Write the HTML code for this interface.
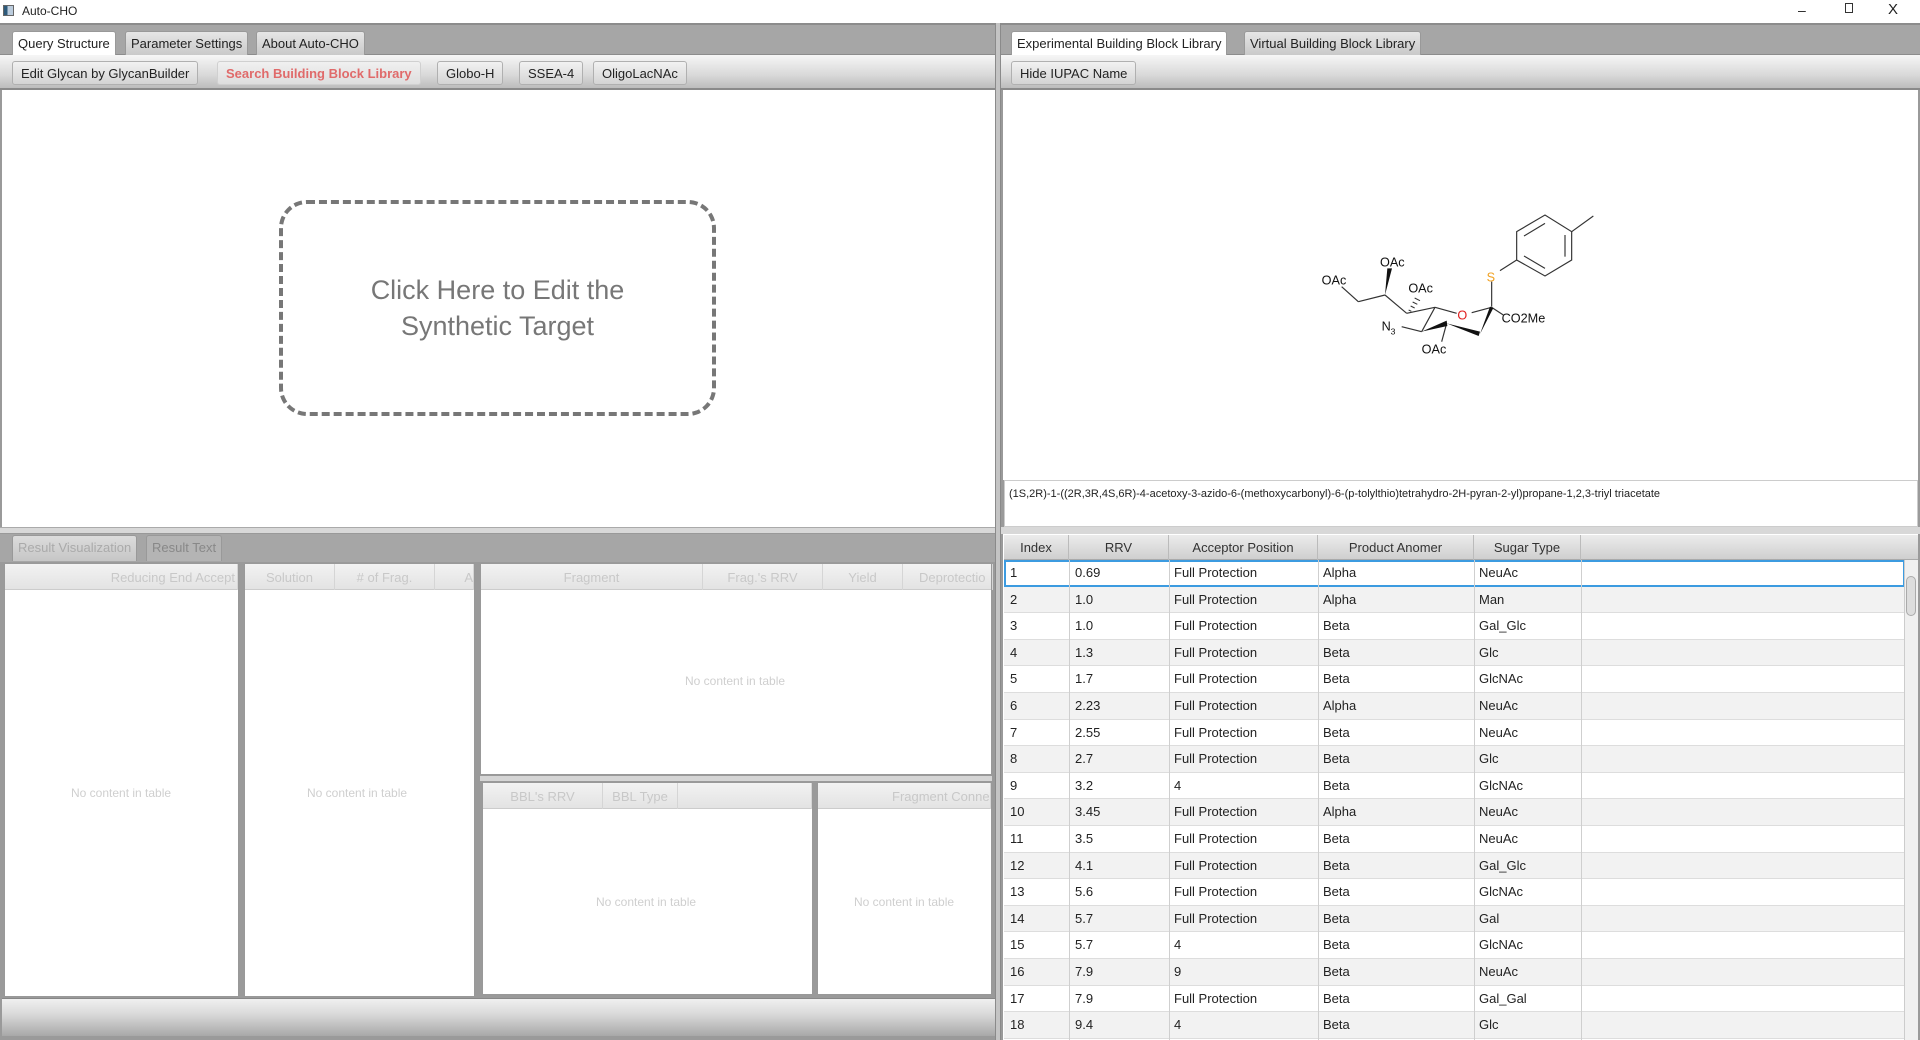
<!DOCTYPE html>
<html><head><meta charset="utf-8"><style>
*{box-sizing:border-box;margin:0;padding:0}
body{width:1920px;height:1040px;position:relative;overflow:hidden;background:#fff;font-family:"Liberation Sans",sans-serif;font-size:13px;color:#222}
.a{position:absolute}
.tabbar{background:#a6a6a6;border-top:2px solid #8c8c8c;border-bottom:1px solid #8c8c8c}
.tab{position:absolute;top:6px;height:24px;border:1px solid #999;border-bottom:none;border-radius:3px 3px 0 0;background:linear-gradient(#e6e6e6,#c9c9c9);padding:4px 5px 0;white-space:nowrap;color:#222}
.tab.sel{background:#fff;height:25px}
.tool{background:linear-gradient(#f6f6f6,#d9d9d9 60%,#bdbdbd);border-bottom:2px solid #8a8a8a}
.btn{position:absolute;top:6px;height:24px;border:1px solid #b0b0b0;border-radius:3px;background:linear-gradient(#f2f2f2,#d4d4d4);padding:4px 8px 0;white-space:nowrap;color:#222}
.hdr{position:absolute;background:linear-gradient(#f2f2f2,#e3e3e3);border-bottom:1px solid #ccc;height:26px;color:#c8c8c8;font-size:13px}
.hc{position:absolute;top:0;height:26px;border-right:1px solid #d5d5d5;padding-top:6px;text-align:center;overflow:hidden;white-space:nowrap}
.nc{position:absolute;color:#cfcfcf;font-size:12px;white-space:nowrap}
.pane{position:absolute;background:#fff;border:1px solid #999}
.rt{position:absolute;left:1004px;width:901px;height:26.6px;border-bottom:1px solid #ddd}
.rt span{position:absolute;top:5px;font-size:13px}
.vl{position:absolute;top:535px;bottom:0;width:1px;background:#cfcfcf}
</style></head><body>
<div class="a" style="left:3px;top:5px;width:11px;height:11px;border:1px solid #666;background:linear-gradient(90deg,#2d5a7a 40%,#bcd 40%)"></div>
<div class="a" style="left:22px;top:4px;font-size:12px">Auto-CHO</div>
<div class="a" style="left:1798px;top:2px;font-size:14px">–</div>
<div class="a" style="left:1845px;top:3px;width:8px;height:10px;border:1px solid #333"></div>
<div class="a" style="left:1888px;top:1px;font-size:15px">X</div>

<div class="a" style="left:0;top:23px;width:1920px;height:1017px;background:#9a9a9a"></div>

<div class="a tabbar" style="left:0;top:23px;width:995px;height:32px">
<div class="tab sel" style="left:12px">Query Structure</div>
<div class="tab" style="left:125px">Parameter Settings</div>
<div class="tab" style="left:256px">About Auto-CHO</div>
</div>
<div class="a tool" style="left:0;top:55px;width:995px;height:35px">
<div class="btn" style="left:12px">Edit Glycan by GlycanBuilder</div>
<div class="btn" style="left:217px;color:#e06a6a;font-weight:bold;border-color:#d0d0d0;background:linear-gradient(#f0f0f0,#dedede)">Search Building Block Library</div>
<div class="btn" style="left:437px">Globo-H</div>
<div class="btn" style="left:519px">SSEA-4</div>
<div class="btn" style="left:593px">OligoLacNAc</div>
</div>
<div class="a" style="left:2px;top:90px;width:993px;height:437px;background:#fff"></div>
<div class="a" style="left:279px;top:200px;width:437px;height:216px;border:4px dashed #777;border-radius:28px;color:#777;font-size:27px;text-align:center;padding-top:68px;line-height:36px">Click Here to Edit the<br>Synthetic Target</div>
<div class="a" style="left:0;top:527px;width:995px;height:7px;background:#d8d8d8;border-top:1px solid #aaa;border-bottom:1px solid #999"></div>

<div class="a" style="left:0;top:534px;width:995px;height:28px;background:#a6a6a6"></div>
<div class="tab" style="left:12px;top:535px;height:26px;color:#aaa;background:linear-gradient(#dcdcdc,#c6c6c6)">Result Visualization</div>
<div class="tab" style="left:146px;top:535px;height:26px;color:#888;background:#b4b4b4">Result Text</div>

<div class="pane" style="left:4px;top:563px;width:235px;height:434px">
<div class="hdr" style="left:0;top:0;width:233px"><div class="hc" style="left:0;width:233px;text-align:right;padding-right:2px">Reducing End Accept</div></div>
<div class="nc" style="left:66px;top:222px">No content in table</div></div>
<div class="pane" style="left:244px;top:563px;width:231px;height:434px">
<div class="hdr" style="left:0;top:0;width:229px"><div class="hc" style="left:0;width:90px">Solution</div><div class="hc" style="left:90px;width:100px"># of Frag.</div><div class="hc" style="left:190px;width:39px;text-align:right">A</div></div>
<div class="nc" style="left:62px;top:222px">No content in table</div></div>
<div class="pane" style="left:480px;top:563px;width:512px;height:212px">
<div class="hdr" style="left:0;top:0;width:510px"><div class="hc" style="left:0;width:222px">Fragment</div><div class="hc" style="left:222px;width:120px">Frag.'s RRV</div><div class="hc" style="left:342px;width:80px">Yield</div><div class="hc" style="left:422px;width:90px;text-align:left;padding-left:16px">Deprotectio</div></div>
<div class="nc" style="left:204px;top:110px">No content in table</div></div>
<div class="a" style="left:480px;top:776px;width:512px;height:5px;background:#d5d5d5"></div>
<div class="pane" style="left:482px;top:782px;width:331px;height:213px">
<div class="hdr" style="left:0;top:0;width:329px"><div class="hc" style="left:0;width:120px">BBL's RRV</div><div class="hc" style="left:120px;width:75px">BBL Type</div><div class="hc" style="left:195px;width:134px"></div></div>
<div class="nc" style="left:113px;top:112px">No content in table</div></div>
<div class="pane" style="left:817px;top:782px;width:175px;height:213px">
<div class="hdr" style="left:0;top:0;width:173px"><div class="hc" style="left:0;width:173px;text-align:left;padding-left:74px">Fragment Conne</div></div>
<div class="nc" style="left:36px;top:112px">No content in table</div></div>
<div class="a" style="left:2px;top:998px;width:993px;height:38px;background:linear-gradient(#f0f0f0,#dadada 40%,#a8a8a8);border-top:1px solid #888"></div>

<div class="a" style="left:995px;top:23px;width:6px;height:1017px;background:#c4c4c4;border-left:1px solid #8a8a8a;border-right:1px solid #8a8a8a"></div>

<div class="a tabbar" style="left:1001px;top:23px;width:919px;height:32px">
<div class="tab sel" style="left:10px">Experimental Building Block Library</div>
<div class="tab" style="left:243px">Virtual Building Block Library</div>
</div>
<div class="a tool" style="left:1001px;top:55px;width:919px;height:35px">
<div class="btn" style="left:10px">Hide IUPAC Name</div>
</div>
<div class="a" style="left:1003px;top:90px;width:915px;height:390px;background:#fff"></div>
<svg class="a" style="left:1300px;top:200px" width="320" height="160" viewBox="0 0 960 480" font-family="Liberation Sans,sans-serif" font-size="38">
<g stroke="#333" stroke-width="3.5" fill="none">
<polygon points="650,95 735,45 815,95 815,180 735,228 650,180"/>
<line x1="672" y1="108" x2="735" y2="70"/><line x1="795" y1="105" x2="795" y2="170"/><line x1="672" y1="168" x2="735" y2="205"/>
<line x1="815" y1="95" x2="880" y2="48"/>
<line x1="650" y1="180" x2="600" y2="212"/>
<line x1="575" y1="245" x2="575" y2="320"/>
<line x1="575" y1="322" x2="515" y2="338"/>
<line x1="470" y1="340" x2="405" y2="322"/>
<line x1="405" y1="322" x2="320" y2="340"/>
<line x1="405" y1="322" x2="365" y2="395"/>
<line x1="365" y1="395" x2="305" y2="380"/>
<line x1="320" y1="340" x2="255" y2="285"/>
<line x1="255" y1="285" x2="175" y2="305"/>
<line x1="175" y1="305" x2="125" y2="260"/>
<line x1="440" y1="370" x2="425" y2="425"/>
<line x1="575" y1="322" x2="610" y2="345"/>
</g>
<g fill="#111">
<polygon points="365,395 440,362 442,378"/>
<polygon points="440,370 540,395 536,408"/>
<polygon points="540,402 570,320 580,324"/>
<polygon points="255,285 262,205 276,205"/>
</g>
<g stroke="#333" stroke-width="3">
<line x1="326" y1="330" x2="334" y2="334"/><line x1="332" y1="318" x2="344" y2="324"/><line x1="338" y1="306" x2="352" y2="313"/><line x1="344" y1="294" x2="360" y2="302"/>
</g>
<text x="560" y="245" fill="#f0a020">S</text>
<text x="472" y="358" fill="#e02020">O</text>
<text x="605" y="368" fill="#111">CO2Me</text>
<text x="245" y="392" fill="#111">N</text><text x="272" y="404" font-size="26" fill="#111">3</text>
<text x="365" y="460" fill="#111">OAc</text>
<text x="325" y="277" fill="#111">OAc</text>
<text x="240" y="200" fill="#111">OAc</text>
<text x="65" y="253" fill="#111">OAc</text>
</svg>
<div class="a" style="left:1004px;top:480px;width:914px;height:47px;background:#fff;border:1px solid #ccc;font-size:11px;padding:7px 4px;color:#222">(1S,2R)-1-((2R,3R,4S,6R)-4-acetoxy-3-azido-6-(methoxycarbonyl)-6-(p-tolylthio)tetrahydro-2H-pyran-2-yl)propane-1,2,3-triyl triacetate</div>
<div class="a" style="left:1001px;top:527px;width:919px;height:7px;background:#d8d8d8"></div>

<div class="a" style="left:1003px;top:534px;width:915px;height:506px;background:#fff"></div>
<div class="a" style="left:1004px;top:535px;width:914px;height:25px;background:linear-gradient(#ececec,#cfcfcf);border-bottom:1px solid #aaa;color:#333">
<div class="hc" style="left:0;width:65px;border-color:#bbb;padding-top:5px">Index</div>
<div class="hc" style="left:65px;width:100px;border-color:#bbb;padding-top:5px">RRV</div>
<div class="hc" style="left:165px;width:149px;border-color:#bbb;padding-top:5px">Acceptor Position</div>
<div class="hc" style="left:314px;width:156px;border-color:#bbb;padding-top:5px">Product Anomer</div>
<div class="hc" style="left:470px;width:107px;border-color:#bbb;padding-top:5px">Sugar Type</div>
</div>
<div id="rows"></div>
<div class="a" style="left:1904px;top:560px;width:14px;height:480px;background:#f0f0f0;border-left:1px solid #ccc"></div>
<div class="a" style="left:1906px;top:576px;width:10px;height:40px;background:#ddd;border:1px solid #aaa;border-radius:5px"></div>
<script>
var d=[["1","0.69","Full Protection","Alpha","NeuAc"],["2","1.0","Full Protection","Alpha","Man"],["3","1.0","Full Protection","Beta","Gal_Glc"],["4","1.3","Full Protection","Beta","Glc"],["5","1.7","Full Protection","Beta","GlcNAc"],["6","2.23","Full Protection","Alpha","NeuAc"],["7","2.55","Full Protection","Beta","NeuAc"],["8","2.7","Full Protection","Beta","Glc"],["9","3.2","4","Beta","GlcNAc"],["10","3.45","Full Protection","Alpha","NeuAc"],["11","3.5","Full Protection","Beta","NeuAc"],["12","4.1","Full Protection","Beta","Gal_Glc"],["13","5.6","Full Protection","Beta","GlcNAc"],["14","5.7","Full Protection","Beta","Gal"],["15","5.7","4","Beta","GlcNAc"],["16","7.9","9","Beta","NeuAc"],["17","7.9","Full Protection","Beta","Gal_Gal"],["18","9.4","4","Beta","Glc"]];
var xs=[6,71,170,319,475],h="";
d.forEach(function(r,i){var t=560+i*26.6;var bg=i%2?"#f2f2f2":"#fff";var st=i==0?"border:2px solid #3c9be0;":"";
h+='<div class="rt" style="top:'+t+'px;background:'+bg+';'+st+'">';
r.forEach(function(c,j){h+='<span style="left:'+(xs[j]-(i==0?2:0))+'px;'+(i==0?'top:3px':'')+'">'+c+'</span>'});h+='</div>'});
document.getElementById("rows").innerHTML=h;
</script>
<div class="vl" style="left:1069px;top:560px"></div><div class="vl" style="left:1169px;top:560px"></div><div class="vl" style="left:1318px;top:560px"></div><div class="vl" style="left:1474px;top:560px"></div><div class="vl" style="left:1581px;top:560px"></div>
</body></html>
